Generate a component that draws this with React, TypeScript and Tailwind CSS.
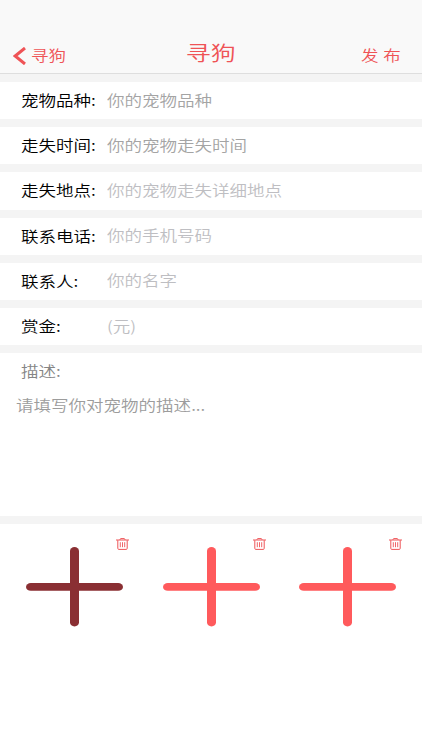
import clsx from "clsx";

interface Field {
  label: string;
  placeholder: string;
  tone: string;
}

const fields: Field[] = [
  { label: "宠物品种:", placeholder: "你的宠物品种", tone: "text-[#a4a4a4]" },
  { label: "走失时间:", placeholder: "你的宠物走失时间", tone: "text-[#a4a4a4]" },
  { label: "走失地点:", placeholder: "你的宠物走失详细地点", tone: "text-[#bebec2] pb-px" },
  { label: "联系电话:", placeholder: "你的手机号码", tone: "text-[#bebec2] pb-px" },
  { label: "联系人:", placeholder: "你的名字", tone: "text-[#bebec2] pb-px" },
  { label: "赏金:", placeholder: "(元)", tone: "text-[#bebec2] pb-px" },
];

const slots = ["text-[#8a2f33]", "text-[#ff5a5c]", "text-[#ff5a5c]"];

// The whole form uses slightly widened glyphs
const wide = "block origin-left scale-x-120 whitespace-nowrap text-[14.6px] leading-[22px]";

function TrashIcon() {
  return (
    <svg width="13" height="12" viewBox="0 0 13 12" fill="none" stroke="#ee5558" strokeWidth="1">
      <path d="M0 2H13M3.8 1.9L4.6 0.6H8.4L9.2 1.9M1.8 2.2V10.4Q1.8 11.4 2.8 11.4H10.2Q11.2 11.4 11.2 10.4V2.2" />
      <path d="M4.3 4.2V9.2M6.5 4.2V9.2M8.7 4.2V9.2" strokeWidth="0.9" />
    </svg>
  );
}

function PhotoSlot({ color }: { color: string }) {
  return (
    <div className="relative h-[80px] w-[97px]">
      <svg className={color} width="97" height="80" viewBox="0 0 97 80" fill="currentColor">
        <rect x="0" y="36" width="97" height="7.8" rx="4.8" ry="3.9" />
        <rect x="44" y="0" width="9" height="79.5" rx="4.5" ry="3.9" />
      </svg>
      <button type="button" className="absolute -top-[8.5px] left-[90px]">
        <TrashIcon />
      </button>
    </div>
  );
}

export default function App() {
  return (
    <div className="h-[750px] w-[422px] overflow-hidden bg-white font-['Noto_Sans_CJK_SC','Noto_Sans',sans-serif] font-[350]">
      <header className="grid h-[74px] grid-cols-3 items-end border-b border-[#dedede] bg-[#f9f9f9] text-[#ef5356]">
        <button type="button" className="flex items-center pb-[7px] pl-[13px]">
          <svg className="mt-[2px]" width="13" height="18" viewBox="0 0 13 18" fill="none" stroke="currentColor" strokeWidth="3">
            <path d="M12 1L2.2 9L12 17" />
          </svg>
          <span className={clsx(wide, "ml-[4.5px]")}>寻狗</span>
        </button>
        <h1 className="scale-x-120 pb-[6px] pr-[1px] text-center text-[20.8px] font-[350] leading-[30px]">寻狗</h1>
        <button type="button" className="flex justify-start pb-[7px] pl-[80px]">
          <span className={clsx(wide, "[word-spacing:0.6px]")}>发 布</span>
        </button>
      </header>

      <main>
        <div className="h-[8px] bg-[#f4f4f4]" />
        {fields.map((field) => (
          <div key={field.label} className="flex h-[45.2px] items-center border-b-[8.2px] border-[#f4f4f4] pb-px pl-[21px]">
            <label className="w-[85.5px] text-black">
              <span className={wide}>{field.label}</span>
            </label>
            <div className={field.tone}>
              <span className={wide}>{field.placeholder}</span>
            </div>
          </div>
        ))}

        <section className="h-[170.8px] border-b-[8.2px] border-[#f4f4f4] pt-[7px]">
          <div className="pl-[21px] text-[#858585]">
            <span className={wide}>描述:</span>
          </div>
          <div className="mt-[12px] pl-[15.5px] text-[#9c9c9c]">
            <span className={wide}>请填写你对宠物的描述...</span>
          </div>
        </section>

        <section className="flex gap-[39.5px] pt-[23px] pl-[26px]">
          {slots.map((color, i) => (
            <PhotoSlot key={i} color={color} />
          ))}
        </section>
      </main>
    </div>
  );
}
